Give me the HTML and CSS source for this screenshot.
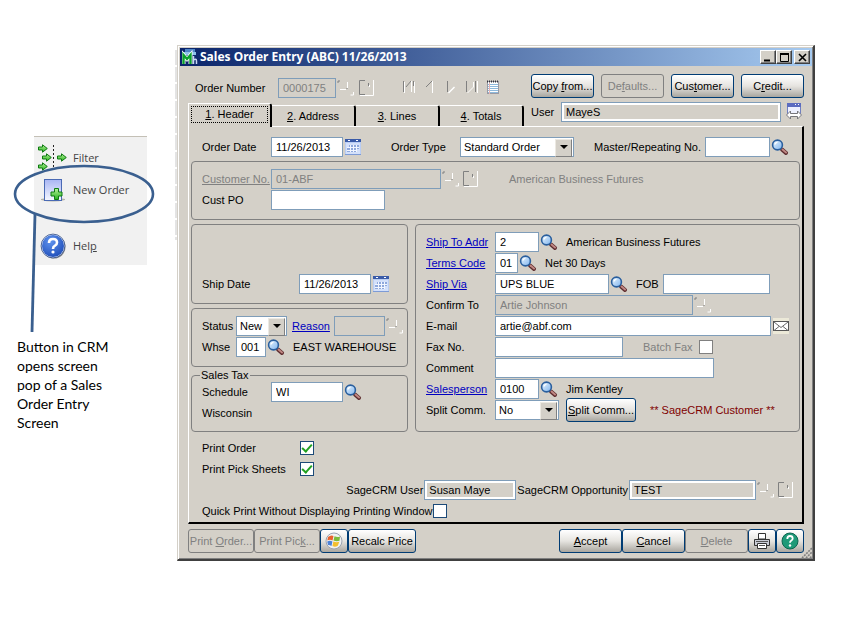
FILE: index.html
```
<!DOCTYPE html>
<html lang="en">
<head>
  <meta charset="UTF-8">
  <meta name="viewport" content="width=device-width, initial-scale=1.0">
  <title>Sales Order Entry</title>
  <link rel="stylesheet" href="styles.css">
</head>
<body>
  <svg class="sprite" aria-hidden="true">
    <defs>
      <linearGradient id="lens" x1="0" y1="0" x2="1" y2="1">
        <stop offset="0" stop-color="#eaf6ff"/>
        <stop offset="1" stop-color="#7fb4ee"/>
      </linearGradient>
      <linearGradient id="sheet" x1="0" y1="0" x2="0" y2="1">
        <stop offset="0" stop-color="#a9b6f3"/>
        <stop offset="1" stop-color="#f6f8ff"/>
      </linearGradient>
      <linearGradient id="green" x1="0" y1="0" x2="0" y2="1">
        <stop offset="0" stop-color="#b8f59a"/>
        <stop offset="1" stop-color="#25b01c"/>
      </linearGradient>
      <radialGradient id="blueball" cx="0.4" cy="0.3" r="0.8">
        <stop offset="0" stop-color="#5f93ee"/>
        <stop offset="1" stop-color="#1a48b4"/>
      </radialGradient>
    </defs>
    <symbol id="search" viewBox="0 0 18 18">
      <path d="M11 11.500l4 3.500" stroke="#5c2a2c" stroke-width="4" stroke-linecap="round"/>
      <path d="M11.500 11.500l3.500 3" stroke="#c08884" stroke-width="2" stroke-linecap="round"/>
      <circle cx="6.500" cy="7" r="4.900" fill="url(#lens)" stroke="#2a5f9e" stroke-width="1.600"/>
      <path d="M3.800 6.500q.6-2 2.600-2.200" stroke="#fff" stroke-width="1.200" fill="none"/>
    </symbol>
    <symbol id="calendar" viewBox="0 0 16 16">
      <rect width="16" height="16" fill="#b9cdf3"/>
      <rect width="16" height="3" fill="#3a5ba8"/>
      <path d="M3 1.500h2M11 1.500h2" stroke="#fff"/>
      <path d="M1 4h14v11H1z" fill="#d3e0fa"/>
      <path d="M4 6h10v4h-2v3H2V9h2z" fill="#8ea8dc"/>
      <path d="M2 8.500h12M2 11.500h10M5.500 6v7M8.500 6v7M11.500 6v7" stroke="#f2f6ff"/>
      <path d="M0 15.500h16" stroke="#7d9bd6"/>
    </symbol>
    <symbol id="search-off" viewBox="0 0 18 18">
      <path d="M1 4V2h2M9.500 9.500h1" stroke="#808080" fill="none"/>
      <path d="M3 10.500h6M10.500 3v6M16.500 13v3h-3" stroke="#fff" fill="none"/>
    </symbol>
    <symbol id="doc-off" viewBox="0 0 18 18">
      <path d="M8 1.500H2.500v14H8" stroke="#808080" fill="none"/>
      <path d="M16.500 1v15.500H3" stroke="#fff" fill="none"/>
      <path d="M11.500 4v3" stroke="#808080"/><path d="M12.500 6v2" stroke="#fff"/>
    </symbol>
    <symbol id="nav-first" viewBox="0 0 14 14">
      <path d="M1.500 1v11M4 7l5-6" stroke="#808080" fill="none"/>
      <path d="M2.500 2v11M9.500 1v11M12.500 2v11" stroke="#fff" fill="none"/>
      <path d="M11.500 1v5" stroke="#808080"/>
    </symbol>
    <symbol id="nav-prev" viewBox="0 0 14 14">
      <path d="M3 7l6-6" stroke="#808080"/><path d="M9.500 1v12" stroke="#fff"/>
    </symbol>
    <symbol id="nav-next" viewBox="0 0 14 14">
      <path d="M3.500 1v11" stroke="#808080"/><path d="M4.500 13l6-6" stroke="#fff" stroke-width="1.500"/>
    </symbol>
    <symbol id="nav-last" viewBox="0 0 14 14">
      <path d="M1.500 1v11M10.500 1v11" stroke="#808080"/>
      <path d="M2.500 13l6-6V2M12.500 1v12" stroke="#fff" fill="none"/>
    </symbol>
    <symbol id="notepad" viewBox="0 0 12 14">
      <rect x=".5" y="1.500" width="11" height="12" fill="#fff" stroke="#9a9aa4"/>
      <path d="M0 1.500h12" stroke="#33343c" stroke-width="2" stroke-dasharray="1 1"/>
      <path d="M1 4.500h10M1 6.500h10M1 8.500h10M1 10.500h10M1 12.500h10" stroke="#8db9dc"/>
      <path d="M2.500 3v11" stroke="#e8b4b4"/>
    </symbol>
    <symbol id="swap" viewBox="0 0 18 18">
      <rect x="1.500" y=".5" width="13" height="10" fill="#eef1ff" stroke="#7080c0"/>
      <rect x="1" y="0" width="14" height="4" fill="#5c6cc0"/>
      <path d="M9 1.500h1M12 1.500h1" stroke="#fff"/>
      <path d="M.5 12l4-4v2.500h7V8l4 4-4 4v-2.500h-7V16z" fill="#fff" stroke="#77777c"/>
    </symbol>
    <symbol id="mail" viewBox="0 0 16 16">
      <rect width="16" height="16" fill="#ece9d8"/>
      <rect x=".5" y="3.500" width="15" height="9" fill="#fff" stroke="#555"/>
      <path d="M1 4l7 5.500L15 4M1 12.500l5-4M15 12.500l-5-4" stroke="#666" fill="none"/>
    </symbol>
    <symbol id="arrow" viewBox="0 0 10 9">
      <path d="M.5 3h4V.8L9.300 4.500 4.500 8.200V6h-4z" fill="url(#green)" stroke="#0d7a10"/>
    </symbol>
  </svg>

  <div class="page">
    <aside class="callout">
      <nav class="crm">
        <a href="#" class="crm-item filter">
          <svg width="30" height="28" viewBox="0 0 30 28">
            <use href="#arrow" x="0" y="0" width="10" height="9"/>
            <use href="#arrow" x="4" y="9" width="10" height="9"/>
            <use href="#arrow" x="0" y="18" width="10" height="9"/>
            <use href="#arrow" x="19" y="9" width="10" height="9"/>
            <path d="M15.500 1v25" stroke="#222" stroke-dasharray="2 2"/>
          </svg>
          Filter
        </a>
        <a href="#" class="crm-item new-order">
          <svg width="30" height="26" viewBox="0 0 30 26">
            <path d="M3 22q12-3 24 0v1q-12 3-24 0z" fill="#b5b3a8"/>
            <rect x="6.500" y="2.500" width="17" height="21" fill="url(#sheet)" stroke="#4a6ab4"/>
            <path d="M16.500 11.500h4v3.500h3.500v4h-3.500v3.500h-4V19H13v-4h3.500z" fill="url(#green)" stroke="#0d7a10"/>
          </svg>
          New Order
        </a>
        <a href="#" class="crm-item help">
          <svg width="30" height="26" viewBox="0 0 30 26">
            <circle cx="16" cy="14" r="11.500" fill="#8d8d8d"/>
            <circle cx="15" cy="13" r="11.500" fill="url(#blueball)" stroke="#e8eefc"/>
            <circle cx="15" cy="13" r="11.900" fill="none" stroke="#27457f" stroke-width=".8"/>
            <path d="M11 10q0-4 4-4t4 3.500q0 2-2 3.200-2 1-2 3.300" fill="none" stroke="#fff" stroke-width="2.600"/>
            <circle cx="15" cy="19" r="1.600" fill="#fff"/>
          </svg>
          <span>Hel<u>p</u></span>
        </a>
      </nav>
      <svg class="ring" width="142" height="172" viewBox="0 0 142 172">
        <ellipse cx="71" cy="30" rx="69" ry="28" fill="none" stroke="#3a5f8f" stroke-width="2.600"/>
        <path d="M22 50L19 168" stroke="#3a5f8f" stroke-width="2.800"/>
      </svg>
      <p class="note">Button in CRM opens screen pop of a Sales Order Entry Screen</p>
    </aside>

    <main class="window">
      <header class="titlebar">
        <svg width="16" height="16" viewBox="0 0 16 16">
          <path d="M1 3h13v3H1z" fill="#8fc2ea"/>
          <path d="M3 0h10v3H3z" fill="#4f86c8"/>
          <path d="M1.500 15V6l3.500 4 3.500-4v9" fill="none" stroke="#fff" stroke-width="4"/>
          <path d="M1.500 15V6l3.500 4 3.500-4v9" fill="none" stroke="#0aa02c" stroke-width="2.400"/>
          <path d="M11.500 7v8M11.500 11q3-2 3 1v3" fill="none" stroke="#c9d8f4" stroke-width="1.500"/>
        </svg>
        <h1>Sales Order Entry (ABC) 11/26/2013</h1>
        <button class="caption" aria-label="Minimize"><svg width="9" height="9"><path d="M0 7.500h6" stroke="#000" stroke-width="2"/></svg></button>
        <button class="caption" aria-label="Maximize"><svg width="9" height="9"><path d="M.5 1v7.500h8V1" fill="none" stroke="#000"/><path d="M0 1h9" stroke="#000" stroke-width="2"/></svg></button>
        <button class="caption close" aria-label="Close"><svg width="9" height="9"><path d="M1 1l7 7M8 1L1 8" stroke="#000" stroke-width="1.600"/></svg></button>
      </header>

      <div class="toolbar">
        <label for="orderNo">Order Number</label>
        <input id="orderNo" class="w-58" value="0000175" disabled>
        <svg class="icon"><use href="#search-off"/></svg>
        <svg class="icon"><use href="#doc-off"/></svg>
        <div class="nav">
          <svg><use href="#nav-first"/></svg>
          <svg><use href="#nav-prev"/></svg>
          <svg><use href="#nav-next"/></svg>
          <svg><use href="#nav-last"/></svg>
          <svg><use href="#notepad"/></svg>
        </div>
        <div class="actions">
          <button class="btn">Copy <u>f</u>rom...</button>
          <button class="btn" disabled>De<u>f</u>aults...</button>
          <button class="btn">Cus<u>t</u>omer...</button>
          <button class="btn">C<u>r</u>edit...</button>
        </div>
      </div>

      <div class="tabs">
        <button class="tab active"><span><u>1</u>. Header</span></button>
        <button class="tab"><u>2</u>. Address</button>
        <button class="tab"><u>3</u>. Lines</button>
        <button class="tab"><u>4</u>. Totals</button>
        <div class="user">
          <label for="user">User</label>
          <input id="user" class="grow" value="MayeS" readonly>
          <svg class="icon"><use href="#swap"/></svg>
        </div>
      </div>

      <form class="panel">
        <div class="row inset">
          <label class="name" for="orderDate">Order Date</label>
          <input id="orderDate" class="w-72" value="11/26/2013">
          <svg class="cal"><use href="#calendar"/></svg>
          <label class="name type" for="orderType">Order Type</label>
          <span class="select w-114">
            <select id="orderType"><option>Standard Order</option></select>
          </span>
          <label class="master" for="master">Master/Repeating No.</label>
          <input id="master" class="grow" value="">
          <svg class="icon"><use href="#search"/></svg>
        </div>

        <section class="box">
          <div class="row">
            <span class="name off"><u>Customer No.</u></span>
            <input class="w-170" aria-label="Customer No." value="01-ABF" disabled>
            <svg class="icon"><use href="#search-off"/></svg>
            <svg class="icon"><use href="#doc-off"/></svg>
            <span class="off customer">American Business Futures</span>
          </div>
          <div class="row">
            <label class="name" for="custPo">Cust PO</label>
            <input id="custPo" class="w-114" value="">
          </div>
        </section>

        <div class="columns">
          <div class="left">
            <section class="box ship">
              <div class="row">
                <label class="name wide" for="shipDate">Ship Date</label>
                <input id="shipDate" class="w-72" value="11/26/2013">
                <svg class="cal"><use href="#calendar"/></svg>
              </div>
            </section>
            <section class="box">
              <div class="row">
                <label class="name short" for="status">Status</label>
                <span class="select w-51">
                  <select id="status"><option>New</option></select>
                </span>
                <a href="#" class="reason">Reason</a>
                <input class="w-51" aria-label="Reason" value="" disabled>
                <svg class="icon"><use href="#search-off"/></svg>
              </div>
              <div class="row">
                <label class="name short" for="whse">Whse</label>
                <input id="whse" class="w-30" value="001">
                <svg class="icon"><use href="#search"/></svg>
                <span class="info">EAST WAREHOUSE</span>
              </div>
            </section>
            <section class="box tax">
              <h2>Sales Tax</h2>
              <div class="row">
                <label class="name" for="schedule">Schedule</label>
                <input id="schedule" class="w-72" value="WI">
                <svg class="icon"><use href="#search"/></svg>
              </div>
              <div class="row">Wisconsin</div>
            </section>
          </div>

          <section class="box right">
            <div class="row">
              <a href="#" class="name">Ship To Addr</a>
              <input class="w-44" aria-label="Ship To Addr" value="2">
              <svg class="icon"><use href="#search"/></svg>
              <span class="info">American Business Futures</span>
            </div>
            <div class="row">
              <a href="#" class="name">Terms Code</a>
              <input class="w-23" aria-label="Terms Code" value="01">
              <svg class="icon"><use href="#search"/></svg>
              <span class="info">Net 30 Days</span>
            </div>
            <div class="row">
              <a href="#" class="name">Ship Via</a>
              <input class="w-114" aria-label="Ship Via" value="UPS BLUE">
              <svg class="icon"><use href="#search"/></svg>
              <label class="info fob" for="fob">FOB</label>
              <input id="fob" class="grow end" value="">
            </div>
            <div class="row">
              <label class="name" for="confirm">Confirm To</label>
              <input id="confirm" class="w-198" value="Artie Johnson" disabled>
              <svg class="icon"><use href="#search-off"/></svg>
            </div>
            <div class="row">
              <label class="name" for="email">E-mail</label>
              <input id="email" class="grow" value="artie@abf.com">
              <svg class="cal"><use href="#mail"/></svg>
            </div>
            <div class="row">
              <label class="name" for="fax">Fax No.</label>
              <input id="fax" class="w-128" value="">
              <label class="off batch" for="batch">Batch Fax</label>
              <input type="checkbox" id="batch" disabled>
            </div>
            <div class="row">
              <label class="name" for="comment">Comment</label>
              <input id="comment" class="w-219" value="">
            </div>
            <div class="row">
              <a href="#" class="name">Salesperson</a>
              <input class="w-44" aria-label="Salesperson" value="0100">
              <svg class="icon"><use href="#search"/></svg>
              <span class="info">Jim Kentley</span>
            </div>
            <div class="row">
              <label class="name" for="split">Split Comm.</label>
              <span class="select w-64">
                <select id="split"><option>No</option></select>
              </span>
              <button type="button" class="btn split"><u>S</u>plit Comm...</button>
              <strong class="flag">** SageCRM Customer **</strong>
            </div>
          </section>
        </div>

        <div class="row inset">
          <label class="name wide" for="printOrder">Print Order</label>
          <input type="checkbox" id="printOrder" checked>
        </div>
        <div class="row inset">
          <label class="name wide" for="printPick">Print Pick Sheets</label>
          <input type="checkbox" id="printPick" checked>
        </div>
        <div class="row inset sage">
          <label for="sageUser">SageCRM User</label>
          <input id="sageUser" class="w-92" value="Susan Maye" readonly>
          <label for="sageOpp">SageCRM Opportunity</label>
          <input id="sageOpp" class="w-127" value="TEST" readonly>
          <svg class="icon"><use href="#search-off"/></svg>
          <svg class="icon"><use href="#doc-off"/></svg>
        </div>
        <div class="row inset">
          <label class="quick" for="quick">Quick Print Without Displaying Printing Window</label>
          <input type="checkbox" id="quick">
        </div>
      </form>

      <footer class="footer">
        <button class="btn print" disabled>Print <u>O</u>rder...</button>
        <button class="btn print" disabled>Print Pic<u>k</u>...</button>
        <button class="btn small" aria-label="Office">
          <svg width="18" height="18" viewBox="0 0 18 18">
            <circle cx="9" cy="9" r="8" fill="#f1f1f1" stroke="#9aa2b0"/>
            <path d="M3 5q3-2.500 5.500-1L7.500 8.500Q5 7 2.300 8.500z" fill="#e8622c"/>
            <path d="M9.500 4.200q3 1.500 5.500.3l-.5 4.200q-3 1-6-.2z" fill="#7dbb3a"/>
            <path d="M2.200 9.500q2.700-1.500 5.200 0L6.500 14Q4 12.500 3 13z" fill="#4b82d8"/>
            <path d="M8.300 9.500q3 1.200 6 .3l-1.500 4q-2.500 1.500-5.300.3z" fill="#f4bf2e"/>
          </svg>
        </button>
        <button class="btn recalc">Recalc Price</button>
        <button class="btn accept"><u>A</u>ccept</button>
        <button class="btn"><u>C</u>ancel</button>
        <button class="btn" disabled><u>D</u>elete</button>
        <button class="btn small" aria-label="Print">
          <svg width="18" height="18" viewBox="0 0 18 18">
            <path d="M5.500 1.500h7V7h-7z" fill="#fff" stroke="#333"/>
            <path d="M1.500 7.500h15v6h-15z" fill="#c9ccd6" stroke="#333"/>
            <path d="M4.500 11.500h9v5h-9z" fill="#fff" stroke="#333"/>
            <path d="M6 13.500h6M3 9.500h12" stroke="#555"/>
          </svg>
        </button>
        <button class="btn small" aria-label="Help">
          <svg width="18" height="18" viewBox="0 0 18 18">
            <circle cx="9" cy="9" r="8" fill="#1f9a78" stroke="#0c6650"/>
            <path d="M6.300 7q0-3 2.700-3t2.700 2.500q0 1.300-1.300 2-1.400.8-1.400 2.300" fill="none" stroke="#fff" stroke-width="1.800"/>
            <circle cx="9" cy="13.500" r="1.200" fill="#fff"/>
          </svg>
        </button>
      </footer>
      <svg class="grip" width="12" height="12"><path d="M2 12L12 2M6 12l6-6M10 12l2-2" stroke="#808080" stroke-width="1.600" stroke-dasharray="2 1"/></svg>
    </main>
  </div>
</body>
</html>
```
FILE: styles.css
```
* {
  box-sizing: border-box;
}
body {
  margin: 0;
  background: #fff;
  color: #000;
  font-family: "Liberation Sans", Arial, sans-serif;
  font-size: 11px;
  line-height: 14px;
}
input, select, button {
  margin: 0;
  font: inherit;
  color: inherit;
}
svg {
  display: block;
  flex: none;
}
.sprite {
  position: absolute;
  width: 0;
  height: 0;
}
.page {
  display: grid;
  grid-template-columns: 177px minmax(0, 1fr);
  align-items: start;
  padding: 45px 28px 0 0;
}

/* left callout */
.callout {
  position: relative;
  padding-top: 91px;
}
/* sliver of the page behind the window */
.callout::after {
  content: "";
  position: absolute;
  top: 5px;
  right: 0;
  width: 2px;
  height: 190px;
  background: repeating-linear-gradient(#e4e4e4 0 15px, #fff 15px 17px);
}
.crm {
  width: 113px;
  height: 129px;
  margin-left: 34px;
  padding: 7px 4px 0;
  background: #f1f1f1;
  border-top: 1px solid #c4c0b6;
}
.crm-item {
  display: flex;
  align-items: center;
  gap: 5px;
  color: #444;
  font-family: "Open Sans", sans-serif;
  font-size: 11px;
  text-decoration: none;
}
.new-order {
  margin-top: 5px;
}
.help {
  margin-top: 30px;
}
.ring {
  position: absolute;
  left: 13px;
  top: 119px;
}
.note {
  width: 100px;
  margin: 72px 0 0 17px;
  font-family: Lato, sans-serif;
  font-size: 14px;
  line-height: 19px;
}

/* window frame */
.window {
  position: relative;
  padding: 2px 1px 6px 2px;
  background: #d4d0c8;
  border: 1px solid #d4d0c8;
  border-right: 2px solid #404040;
  border-bottom: 2px solid #404040;
  box-shadow: inset 1px 1px #fff, inset -1px -1px #808080;
}
.titlebar {
  display: flex;
  align-items: center;
  height: 18px;
  padding: 0 2px;
  background: linear-gradient(to right, #0a246a, #a6caf0);
}
.titlebar h1 {
  flex: 1;
  margin: 0 0 0 2px;
  color: #fff;
  font-family: "Noto Sans", sans-serif;
  font-size: 12px;
  line-height: 18px;
}
.caption {
  display: flex;
  align-items: center;
  justify-content: center;
  width: 16px;
  height: 14px;
  padding: 0;
  background: #d4d0c8;
  border: 1px solid;
  border-color: #fff #404040 #404040 #fff;
  box-shadow: inset -1px -1px #808080;
}
.caption.close {
  margin-left: 2px;
}
.grip {
  position: absolute;
  right: 1px;
  bottom: 1px;
}

/* controls */
input:not([type]) {
  height: 20px;
  padding: 0 4px;
  background: #fff;
  border: 1px solid #7f9db9;
  border-radius: 0;
  outline: none;
  flex: none;
}
input:not([type]):disabled {
  background: #d4d0c8;
  color: #808080;
}
input:not([type]):read-only:not(:disabled) {
  background: #d4d0c8;
  box-shadow: inset 0 0 0 2px #fff;
}
input.grow:not([type]) {
  flex: 1;
  min-width: 0;
}
input[type="checkbox"] {
  appearance: none;
  flex: none;
  display: grid;
  place-items: center;
  width: 14px;
  height: 14px;
  background: #fff;
  border: 1px solid #1c4a78;
}
input[type="checkbox"]:disabled {
  border-color: #808080;
}
input[type="checkbox"]:checked::before {
  content: "";
  width: 8px;
  height: 4px;
  margin-bottom: 3px;
  border: solid #21a121;
  border-width: 0 0 2px 2px;
  transform: rotate(-48deg);
}
.select {
  position: relative;
  flex: none;
  height: 20px;
}
.select select {
  appearance: none;
  display: block;
  width: 100%;
  height: 20px;
  padding: 0 3px;
  background: #fff;
  border: 1px solid #7f9db9;
  border-radius: 0;
}
.select::before {
  content: "";
  position: absolute;
  top: 2px;
  right: 2px;
  width: 15px;
  height: 16px;
  background: #d4d0c8;
  border: 1px solid;
  border-color: #ece9e2 #808080 #808080 #ece9e2;
  pointer-events: none;
}
.select::after {
  content: "";
  position: absolute;
  top: 8px;
  right: 6px;
  border: 4px solid transparent;
  border-top-color: #000;
  border-bottom: 0;
  pointer-events: none;
}
.btn {
  display: flex;
  align-items: center;
  justify-content: center;
  flex: none;
  width: 63px;
  height: 24px;
  padding: 0;
  white-space: pre;
  background: linear-gradient(#fff, #e6e4e0 50%, #a9a69f);
  border: 1px solid #003c74;
  border-radius: 3px;
}
.btn:disabled {
  background: #d4d0c8;
  border-color: #808080;
  color: #808080;
}
.btn.small {
  width: 28px;
}
.icon {
  width: 18px;
  height: 18px;
  margin-left: 1px;
}
.cal {
  width: 16px;
  height: 16px;
  margin-left: 2px;
}
.off {
  color: #808080;
}
a {
  color: #0000c0;
}

.w-23 { width: 23px; }
.w-30 { width: 30px; }
.w-44 { width: 44px; }
.w-51 { width: 51px; }
.w-58 { width: 58px; }
.w-64 { width: 64px; }
.w-72 { width: 72px; }
.w-92 { width: 92px; }
.w-114 { width: 114px; }
.w-127 { width: 127px; }
.w-128 { width: 128px; }
.w-170 { width: 170px; }
.w-198 { width: 198px; }
.w-219 { width: 219px; }

/* toolbar and tabs */
.toolbar {
  display: flex;
  align-items: flex-end;
  padding: 8px 8px 4px 15px;
}
.toolbar label {
  width: 83px;
  line-height: 20px;
}
.toolbar .icon {
  margin-bottom: 1px;
}
.toolbar .icon + .icon {
  margin-left: 2px;
}
.nav {
  display: flex;
  gap: 7px;
  margin: 0 0 4px 27px;
}
.nav svg {
  width: 14px;
  height: 14px;
}
.actions {
  display: flex;
  gap: 7px;
  margin-left: auto;
}
.tabs {
  display: flex;
  align-items: flex-end;
  height: 24px;
  padding: 0 8px;
}
.tab {
  width: 84px;
  height: 21px;
  padding: 0;
  background: none;
  border: solid;
  border-width: 1px 2px 0 0;
  border-color: #fff #000 #fff #fff;
  border-radius: 0 3px 0 0;
}
.tab.active {
  position: relative;
  z-index: 1;
  height: 24px;
  margin-bottom: -1px;
  padding: 2px;
  background: #d4d0c8;
  border-left-width: 1px;
}
.tab.active span {
  display: block;
  height: 17px;
  margin-bottom: 3px;
  border: 1px dotted #000;
}
.user {
  display: flex;
  flex: 1;
  align-items: center;
  align-self: flex-start;
  margin-left: 7px;
}
.user label {
  width: 30px;
}
.user .icon {
  margin-left: 5px;
}

/* order form */
.panel {
  margin: 0 8px;
  padding: 10px 2px 0;
  border: 1px solid;
  border-width: 1px 2px 2px 1px;
  border-color: #fff #000 #000 #fff;
}
.row {
  display: flex;
  align-items: center;
  height: 20px;
  margin-bottom: 1px;
  white-space: nowrap;
}
.inset {
  padding: 0 11px;
}
.name {
  flex: none;
  width: 69px;
}
.name.wide {
  width: 98px;
}
.ship .name.wide {
  width: 97px;
}
.name.short {
  width: 34px;
}
.type {
  margin-left: 30px;
}
.master {
  width: 111px;
  margin-left: 20px;
}
.box {
  margin-top: 4px;
  padding: 7px 10px 8px;
  border: 1px solid #808080;
  border-radius: 4px;
}
.customer {
  margin-left: 30px;
}
.columns {
  display: grid;
  grid-template-columns: 217px minmax(0, 1fr);
  gap: 7px;
  margin: 4px 0 6px;
}
.left .box:first-child, .box.right {
  margin-top: 0;
}
.ship {
  padding-top: 49px;
}
.box.tax {
  position: relative;
  margin-top: 8px;
  padding: 6px 10px 7px;
}
.tax h2 {
  position: absolute;
  left: 8px;
  top: -8px;
  margin: 0;
  padding: 0 1px;
  background: #d4d0c8;
  font-size: 11px;
  font-weight: normal;
}
.reason {
  flex: none;
  width: 42px;
  margin-left: 5px;
}
.info {
  margin-left: 8px;
}
.fob {
  width: 27px;
}
.end {
  margin-right: 19px;
}
.batch {
  width: 56px;
  margin-left: 20px;
}
.split {
  width: 70px;
  margin-left: 7px;
}
.flag {
  margin-left: 14px;
  color: #800000;
  font-weight: normal;
}
.sage {
  justify-content: flex-end;
  gap: 1px;
  padding-right: 6px;
}
.quick {
  width: 231px;
}
.sage .icon {
  margin-left: 0;
}

/* footer buttons */
.footer {
  display: flex;
  padding: 5px 8px 0;
}
.print {
  width: 66px;
}
.recalc {
  width: 68px;
}
.accept {
  margin-left: auto;
}
```
